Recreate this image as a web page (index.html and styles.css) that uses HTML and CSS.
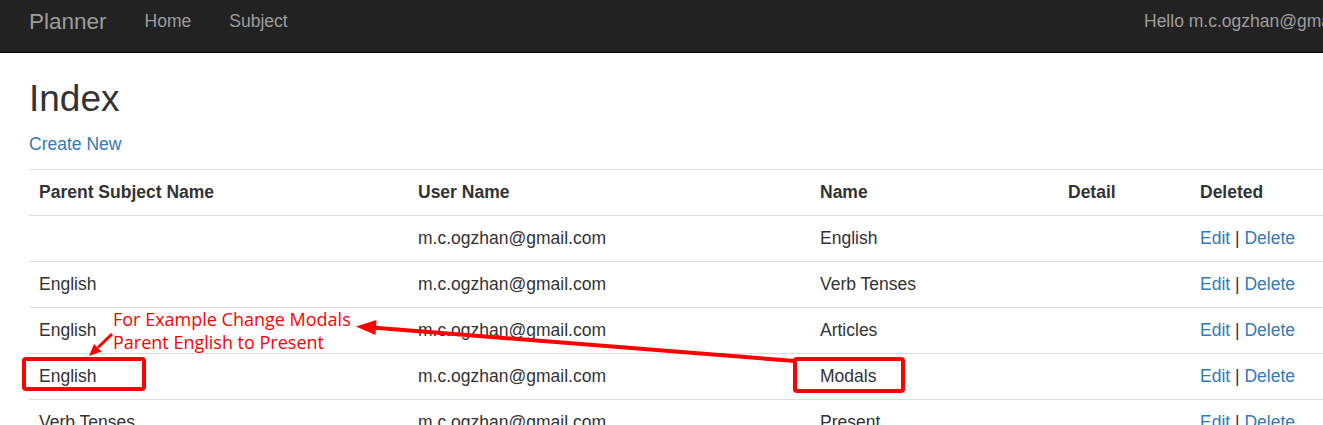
FILE: index.html
```html
<!DOCTYPE html>
<html lang="en">
<head>
<meta charset="utf-8">
<title>Index - Planner</title>
<link rel="stylesheet" href="styles.css">
</head>
<body>
<nav class="navbar">
  <div class="nav-left">
    <a class="brand" href="#">Planner</a>
    <a class="nav-link" href="#">Home</a>
    <a class="nav-link" href="#">Subject</a>
  </div>
  <div class="nav-right">Hello m.c.ogzhan@gmail.com!</div>
</nav>
<main class="content">
  <h2 class="title">Index</h2>
  <p class="create"><a href="#">Create New</a></p>
  <table class="table">
    <colgroup>
      <col class="c1"><col class="c2"><col class="c3"><col class="c4"><col class="c5">
    </colgroup>
    <tr><th>Parent Subject Name</th><th>User Name</th><th>Name</th><th>Detail</th><th>Deleted</th></tr>
    <tr><td></td><td>m.c.ogzhan@gmail.com</td><td>English</td><td></td><td><a href="#">Edit</a> | <a href="#">Delete</a></td></tr>
    <tr><td>English</td><td>m.c.ogzhan@gmail.com</td><td>Verb Tenses</td><td></td><td><a href="#">Edit</a> | <a href="#">Delete</a></td></tr>
    <tr><td>English</td><td>m.c.ogzhan@gmail.com</td><td>Articles</td><td></td><td><a href="#">Edit</a> | <a href="#">Delete</a></td></tr>
    <tr><td>English</td><td>m.c.ogzhan@gmail.com</td><td>Modals</td><td></td><td><a href="#">Edit</a> | <a href="#">Delete</a></td></tr>
    <tr><td>Verb Tenses</td><td>m.c.ogzhan@gmail.com</td><td>Present</td><td></td><td><a href="#">Edit</a> | <a href="#">Delete</a></td></tr>
  </table>
</main>
<div class="note">For Example Change Modals<br>Parent English to Present</div>
<svg class="marks" width="1323" height="425" viewBox="0 0 1323 425">
  <rect x="24" y="359" width="120" height="30" rx="2" fill="none" stroke="#ff0000" stroke-width="4"/>
  <rect x="795" y="359" width="108" height="32" rx="2" fill="none" stroke="#ff0000" stroke-width="4"/>
  <line x1="795" y1="361" x2="372" y2="327.5" stroke="#ff0000" stroke-width="4"/>
  <polygon points="356,326.5 376.5,320 375.5,335" fill="#ff0000"/>
  <line x1="112" y1="334" x2="98" y2="347.5" stroke="#ff0000" stroke-width="3"/>
  <polygon points="89,356 101.5,351.5 94,344" fill="#ff0000"/>
</svg>
</body>
</html>
```
FILE: styles.css
```css
html, body {
  margin: 0;
  padding: 0;
  overflow: hidden;
  width: 1323px;
  height: 425px;
}
body {
  position: relative;
  font-family: "Liberation Sans", Arial, sans-serif;
  font-size: 17.5px;
  line-height: 25px;
  color: #333;
  background: #fff;
}
a {
  color: #337ab7;
  text-decoration: none;
}
.navbar {
  height: 52px;
  background: #222;
  border-bottom: 1px solid #080808;
  display: flex;
  justify-content: space-between;
  box-sizing: content-box;
}
.nav-left {
  display: flex;
  align-items: flex-start;
  padding-top: 9px;
  padding-left: 29px;
}
.brand {
  color: #9d9d9d;
  font-size: 22.5px;
  line-height: 25px;
  margin-right: 38px;
}
.nav-link {
  color: #9d9d9d;
  line-height: 25px;
  margin-right: 38px;
}
.nav-right {
  color: #9d9d9d;
  padding-top: 9px;
  line-height: 25px;
  white-space: nowrap;
  width: 179px;
  overflow: hidden;
}
.content {
  padding-left: 29px;
}
.title {
  margin: 25px 0 13px;
  font-size: 37px;
  line-height: 41px;
  font-weight: 500;
  color: #333;
}
.create {
  margin: 0 0 12px;
}
.table {
  border-collapse: collapse;
  border-spacing: 0;
  table-layout: fixed;
  width: 1311px;
}
.c1 { width: 379px; }
.c2 { width: 402px; }
.c3 { width: 248px; }
.c4 { width: 132px; }
.c5 { width: 150px; }
.table th,
.table td {
  padding: 10px;
  line-height: 25px;
  border-top: 1px solid #ddd;
  text-align: left;
  vertical-align: top;
  white-space: nowrap;
}
.table th {
  font-weight: bold;
}
.note {
  position: absolute;
  left: 112px;
  top: 308px;
  font-family: "Open Sans", "Noto Sans", sans-serif;
  font-size: 18px;
  line-height: 23px;
  color: #ff0000;
  background: #fff;
  padding: 0 1px;
  height: 45px;
  overflow: hidden;
}
.marks {
  position: absolute;
  left: 0;
  top: 0;
  pointer-events: none;
}
```
